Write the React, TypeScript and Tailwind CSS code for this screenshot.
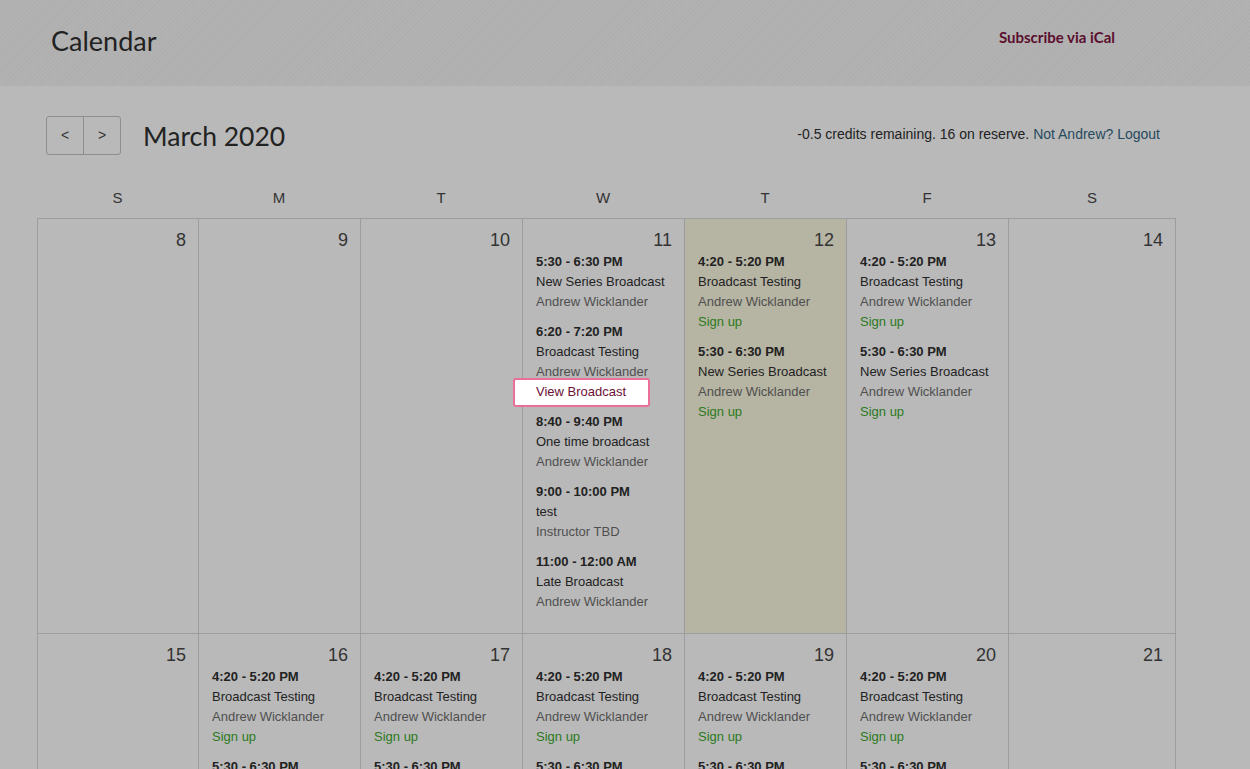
import React from "react";

type Ev = {
    time: string;
    title: string;
    instructor: string;
    action?: "signup" | "view";
};

type Day = {
    date: number;
    today?: boolean;
    events: Ev[];
};

const twoEvents: Ev[] = [
    { time: "4:20 - 5:20 PM", title: "Broadcast Testing", instructor: "Andrew Wicklander", action: "signup" },
    { time: "5:30 - 6:30 PM", title: "New Series Broadcast", instructor: "Andrew Wicklander", action: "signup" },
];

const weeks: Day[][] = [
    [
        { date: 8, events: [] },
        { date: 9, events: [] },
        { date: 10, events: [] },
        {
            date: 11,
            events: [
                { time: "5:30 - 6:30 PM", title: "New Series Broadcast", instructor: "Andrew Wicklander" },
                { time: "6:20 - 7:20 PM", title: "Broadcast Testing", instructor: "Andrew Wicklander", action: "view" },
                { time: "8:40 - 9:40 PM", title: "One time broadcast", instructor: "Andrew Wicklander" },
                { time: "9:00 - 10:00 PM", title: "test", instructor: "Instructor TBD" },
                { time: "11:00 - 12:00 AM", title: "Late Broadcast", instructor: "Andrew Wicklander" },
            ],
        },
        { date: 12, today: true, events: twoEvents },
        { date: 13, events: twoEvents },
        { date: 14, events: [] },
    ],
    [
        { date: 15, events: [] },
        { date: 16, events: twoEvents },
        { date: 17, events: twoEvents },
        { date: 18, events: twoEvents },
        { date: 19, events: twoEvents },
        { date: 20, events: twoEvents },
        { date: 21, events: [] },
    ],
];

const dayLetters = ["S", "M", "T", "W", "T", "F", "S"];

function EventItem({ ev }: { ev: Ev }) {
    return (
        <div className="text-[13px] leading-[20px]">
            <div className="font-bold text-[#222]">{ev.time}</div>
            <div className="text-[#222]">{ev.title}</div>
            <div className="text-[#4f4f4f]">{ev.instructor}</div>
            {ev.action === "signup" && <div className="text-[#2c7a20]">Sign up</div>}
            {ev.action === "view" && (
                <div className="relative">
                    <span className="absolute -left-[23px] -top-[4px] w-[137px] h-[29px] bg-white border-2 border-[#ea6f99] rounded-[3px]" />
                    <span className="relative text-[#6a1035]">View Broadcast</span>
                </div>
            )}
        </div>
    );
}

function DayCell({ day }: { day: Day }) {
    return (
        <div className={`border-r border-b border-[#9d9d9d] pt-[10px] pb-[21px] pl-[13px] pr-[12px] ${day.today ? "bg-[#b6b4a2]" : ""}`}>
            <div className="text-right text-[18px] leading-[22px] text-[#333]">{day.date}</div>
            <div className="flex flex-col gap-[10px] pt-[1px]">
                {day.events.map((ev, i) => (
                    <EventItem key={i} ev={ev} />
                ))}
            </div>
        </div>
    );
}

export default function App() {
    return (
        <div className="min-h-screen bg-[#b9b9b9] font-['Liberation_Sans',Arial,sans-serif]">
            <header className="h-[86px] flex items-start justify-between pl-[51px] pr-[135px] bg-[repeating-linear-gradient(135deg,#b2b2b2_0px,#b2b2b2_2px,#aeaeae_2px,#aeaeae_3px)]">
                <h1 className="mt-[25px] text-[27px] leading-[32px] text-[#222] font-['Lato',sans-serif]">Calendar</h1>
                <a className="mt-[28px] text-[15px] leading-[18px] font-bold text-[#5b0f2e] font-['Lato',sans-serif]">Subscribe via iCal</a>
            </header>

            <main className="pl-[37px]">
                <div className="w-[1139px]">
                    <div className="mt-[30px] flex items-center justify-between pl-[9px] pr-[16px]">
                        <div className="flex items-center">
                            <div className="flex h-[39px] border border-[#8e8e8e] rounded-[3px] text-[14px] text-[#333]">
                                <button className="w-[37px] flex items-center justify-center border-r border-[#8e8e8e]">&lt;</button>
                                <button className="w-[36px] flex items-center justify-center">&gt;</button>
                            </div>
                            <h2 className="ml-[22px] text-[26.5px] leading-[32px] text-[#222] font-['Lato',sans-serif]">March 2020</h2>
                        </div>
                        <div className="-mt-[2px] text-[14px] text-[#222]">
                            -0.5 credits remaining. 16 on reserve. <span className="text-[#274a5e]">Not Andrew? Logout</span>
                        </div>
                    </div>

                    <div className="grid grid-cols-[161px_162px_162px_162px_162px_162px_1fr] pt-[35px] pb-[12px]">
                        {dayLetters.map((l, i) => (
                            <div key={i} className="text-center text-[15px] leading-[16px] text-[#333]">{l}</div>
                        ))}
                    </div>

                    <div className="border-l border-t border-[#9d9d9d]">
                        {weeks.map((week, wi) => (
                            <div key={wi} className="grid grid-cols-[161px_162px_162px_162px_162px_162px_1fr]">
                                {week.map((day) => (
                                    <DayCell key={day.date} day={day} />
                                ))}
                            </div>
                        ))}
                    </div>
                </div>
            </main>
        </div>
    );
}
